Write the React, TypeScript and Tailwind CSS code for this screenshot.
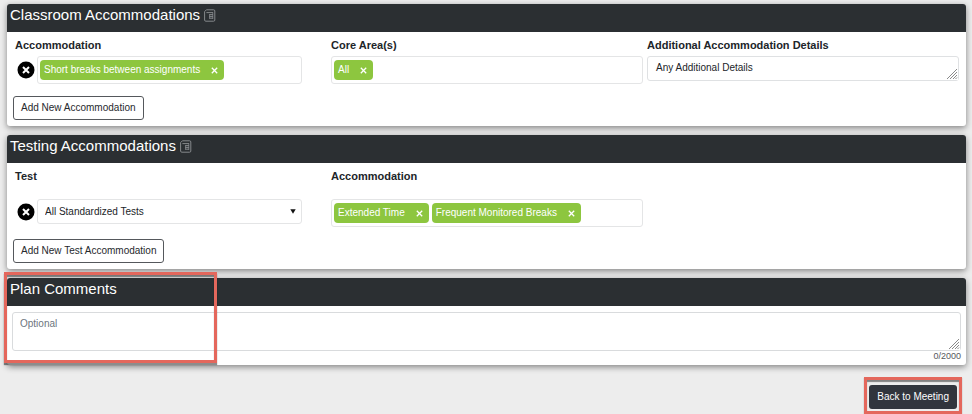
import React, { useState } from 'react';

interface ChipFieldProps {
  label: string;
  items: string[];
}

const NoteIcon: React.FC = () => (
  <svg width="12" height="13" viewBox="0 0 12 13" fill="none" stroke="#85888b" aria-hidden="true">
    <path d="M2.4 0.8H9.6Q10.8 0.8 10.8 2V11Q10.8 12.2 9.6 12.2H1.8Q0.6 12.2 0.6 11V2.6Z" strokeWidth="1" />
    <path d="M2.4 3.6H9M5.2 5.6H9M5.2 7.4H9M5.2 9.2H9" strokeWidth="1" />
    <path d="M8.8 3.4V10M5.6 5.4V9.6" strokeWidth="0.8" />
  </svg>
);

const CrossIcon: React.FC = () => (
  <svg width="7" height="7" viewBox="0 0 7 7" fill="none" stroke="currentColor" strokeWidth="1.3" aria-hidden="true">
    <path d="M0.8 0.8L6.2 6.2M6.2 0.8L0.8 6.2" />
  </svg>
);

const RemoveButton: React.FC<{ label: string }> = ({ label }) => (
  <button type="button" aria-label={label} className="shrink-0">
    <svg width="18" height="18" viewBox="0 0 18 18" fill="none">
      <circle cx="9" cy="9" r="8.5" fill="#000" />
      <path d="M6 6L12 12M12 6L6 12" stroke="#fff" strokeWidth="2" />
    </svg>
  </button>
);

// Drawn over the browser's own resize corner
const ResizeGrip: React.FC = () => (
  <svg width="12" height="12" viewBox="0 0 12 12" className="pointer-events-none absolute right-px bottom-px" aria-hidden="true">
    <path d="M0 0H12V12H0Z" fill="#fff" />
    <path d="M1 11L11 1M4 11L11 4M7 11L11 7M9.5 11L11 9.5" stroke="#8a8a8a" strokeWidth="1" fill="none" />
  </svg>
);

const ChipField: React.FC<ChipFieldProps> = ({ label, items }) => {
  const [chips, setChips] = useState(items);

  return (
    <div className="flex h-7 min-w-0 flex-1 items-center gap-[3px] rounded-[3px] border border-[#e4e5e6] bg-white px-0.5">
      {chips.map((chip) => (
        <span key={chip} className="flex h-5 shrink-0 items-center rounded-sm bg-[#8dc63f] pr-1.5 pl-1 text-white">
          {chip}
          <button
            type="button"
            aria-label={`Remove ${chip}`}
            className="ml-[11px]"
            onClick={() => setChips(chips.filter((c) => c !== chip))}
          >
            <CrossIcon />
          </button>
        </span>
      ))}
      <input type="text" aria-label={label} className="w-0 min-w-0 flex-1 outline-none" />
    </div>
  );
};

const Panel: React.FC<{ title: string; icon?: boolean; children: React.ReactNode }> = ({ title, icon, children }) => (
  <section className="rounded-[3px] bg-white shadow-[0_2px_6px_rgba(0,0,0,0.45)]">
    <h2 className="flex h-7 items-start gap-1 rounded-t-[3px] bg-[#2b2f32] pl-[3px] text-[15px] leading-[22px] text-white">
      {title}
      {icon && (
        <span className="mt-[5px]">
          <NoteIcon />
        </span>
      )}
    </h2>
    {children}
  </section>
);

const AddButton: React.FC<{ children: React.ReactNode }> = ({ children }) => (
  <button type="button" className="h-6 rounded-[3px] border border-[#55585c] bg-white px-[7px] text-[#26292d]">
    {children}
  </button>
);

export default function App() {
  const [comments, setComments] = useState('');

  return (
    <main className="bg-[#ededed] pt-1 pr-[6px] pl-[7px] font-['Liberation_Sans',Arial,sans-serif] text-[10px] leading-3 text-[#212529]">
      <div className="flex flex-col gap-[9px]">
        <Panel title="Classroom Accommodations" icon>
          <div className="grid grid-cols-3 pt-[6px] pr-[3px] pl-2">
            <div className="pr-[29px]">
              <h3 className="mb-1 text-[11px] leading-[14px] font-bold">Accommodation</h3>
              <div className="flex items-center gap-0.5 pl-0.5">
                <RemoveButton label="Remove accommodation" />
                <ChipField label="Accommodation" items={['Short breaks between assignments']} />
              </div>
            </div>
            <div className="pr-1">
              <h3 className="mb-1 text-[11px] leading-[14px] font-bold">Core Area(s)</h3>
              <div className="flex">
                <ChipField label="Core areas" items={['All']} />
              </div>
            </div>
            <div className="pr-1">
              <label htmlFor="details" className="mb-1 block text-[11px] leading-[14px] font-bold">
                Additional Accommodation Details
              </label>
              <div className="relative">
                <textarea
                  id="details"
                  defaultValue="Any Additional Details"
                  className="block h-[25px] w-full overflow-hidden rounded-[3px] border border-[#dfe1e3] px-2 py-[5px]"
                />
                <ResizeGrip />
              </div>
            </div>
          </div>
          <div className="px-[6px] pt-3 pb-[6px]">
            <AddButton>Add New Accommodation</AddButton>
          </div>
        </Panel>

        <Panel title="Testing Accommodations" icon>
          <div className="grid grid-cols-3 pt-[6px] pr-[3px] pl-2">
            <div className="pr-[29px]">
              <label htmlFor="test" className="mb-4 block text-[11px] leading-[14px] font-bold">
                Test
              </label>
              <div className="flex items-center gap-0.5 pl-0.5">
                <RemoveButton label="Remove test" />
                <div className="relative flex-1">
                  <select
                    id="test"
                    className="block h-[25px] w-full appearance-none rounded-[3px] border border-[#e4e5e6] bg-white pr-5 pl-[7px]"
                  >
                    <option>All Standardized Tests</option>
                  </select>
                  <svg width="6" height="5" viewBox="0 0 6 5" className="pointer-events-none absolute top-[10px] right-[6px]" aria-hidden="true">
                    <path d="M0.3 0.3H5.7L3 4.8Z" fill="#111" />
                  </svg>
                </div>
              </div>
            </div>
            <div className="pr-1">
              <h3 className="mb-4 text-[11px] leading-[14px] font-bold">Accommodation</h3>
              <div className="flex">
                <ChipField label="Test accommodation" items={['Extended Time', 'Frequent Monitored Breaks']} />
              </div>
            </div>
          </div>
          <div className="px-[6px] pt-3 pb-[6px]">
            <AddButton>Add New Test Accommodation</AddButton>
          </div>
        </Panel>

        <div className="relative">
          <Panel title="Plan Comments">
            <div className="px-[5px] pt-[6px]">
              <div className="relative">
                <textarea
                  aria-label="Plan comments"
                  placeholder="Optional"
                  maxLength={2000}
                  value={comments}
                  onChange={(e) => setComments(e.target.value)}
                  className="block h-[39px] w-full rounded-[3px] border border-[#d9dbdd] px-[7px] py-[5px] placeholder:text-[#6c757d]"
                />
                <ResizeGrip />
              </div>
              <p className="h-[14px] text-right text-[9px] leading-[10px] text-[#55595d]">{comments.length}/2000</p>
            </div>
          </Panel>
          {/* Highlight around the start of the comments panel */}
          <div className="pointer-events-none absolute -top-[6px] bottom-0.5 -left-[3px] w-[213px] border-[3px] border-[#e4675c] shadow-[0_2px_1px_rgba(0,0,0,0.45),inset_0_2px_1px_rgba(0,0,0,0.45)]" />
        </div>
      </div>

      <div className="mt-3 flex justify-end pr-1">
        <div className="border-[3px] border-[#e4675c] px-0.5 pt-[5px] pb-0.5 shadow-[0_1px_1px_rgba(0,0,0,0.35),inset_0_2px_1px_rgba(0,0,0,0.45)]">
          <button type="button" className="h-6 rounded-[3px] bg-[#31353d] px-2 text-white">
            Back to Meeting
          </button>
        </div>
      </div>
    </main>
  );
}
